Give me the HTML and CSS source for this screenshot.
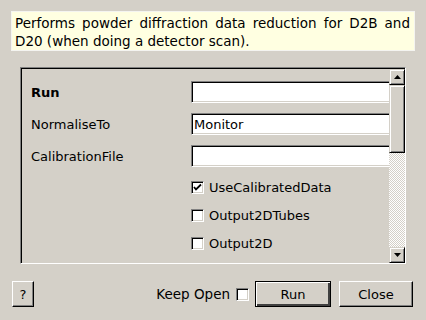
FILE: index.html
```html
<!DOCTYPE html>
<html>
<head>
<meta charset="utf-8">
<link rel="stylesheet" href="styles.css">
</head>
<body>
<div class="dialog">
  <div class="help">Performs powder diffraction data reduction for D2B and D20 (when doing a detector scan).</div>
  <div class="frame">
    <div class="content">
      <div class="row"><span class="label bold">Run</span><span class="input"></span></div>
      <div class="row"><span class="label">NormaliseTo</span><span class="input">Monitor</span></div>
      <div class="row"><span class="label">CalibrationFile</span><span class="input"></span></div>
      <div class="checks">
        <div class="crow"><span class="box"><svg width="11" height="11" viewBox="0 0 11 11"><polyline points="2,5 4,7.5 9,2.5" fill="none" stroke="#000" stroke-width="1.8"/></svg></span><span>UseCalibratedData</span></div>
        <div class="crow"><span class="box"></span><span>Output2DTubes</span></div>
        <div class="crow"><span class="box"></span><span>Output2D</span></div>
      </div>
    </div>
    <div class="scrollbar">
      <div class="sbtn"><svg width="7" height="4" viewBox="0 0 7 4"><polygon points="0,4 7,4 3.5,0" fill="#000"/></svg></div>
      <div class="thumb"></div>
      <div class="track"></div>
      <div class="sbtn"><svg width="7" height="4" viewBox="0 0 7 4"><polygon points="0,0 7,0 3.5,4" fill="#000"/></svg></div>
    </div>
  </div>
  <div class="buttons">
    <div class="btn help-btn">?</div>
    <div class="spacer"></div>
    <span class="keep">Keep Open</span>
    <span class="box keepbox"></span>
    <div class="btn default">Run</div>
    <div class="btn close">Close</div>
  </div>
</div>
</body>
</html>
```

FILE: styles.css
```css
html, body {
  margin: 0;
  padding: 0;
  background: #d4d0c8;
}
body {
  width: 426px;
  height: 320px;
  overflow: hidden;
  font-family: "DejaVu Sans", sans-serif;
  font-size: 13px;
  color: #000;
}
.dialog {
  display: flex;
  flex-direction: column;
  padding-top: 11px;
}
.help {
  margin: 0 11px 0 11px;
  box-sizing: border-box;
  height: 40px;
  border: 1px solid #f4f4f0;
  background: #ffffe1;
  padding: 2px 4px 0 3px;
  font-size: 13.5px;
  line-height: 18px;
  text-align: justify;
}
.frame {
  margin: 16px 0 0 20px;
  width: 386px;
  height: 197px;
  box-sizing: border-box;
  border-style: solid;
  border-width: 1px;
  border-color: #808080 #fff #fff #808080;
  padding: 1px 0 0 1px;
  box-shadow: inset 1px 1px 0 #000;
  display: flex;
}
.content {
  flex: 1;
  overflow: hidden;
  padding: 12px 0 0 9px;
  display: flex;
  flex-direction: column;
  gap: 10px;
}
.row {
  display: flex;
  align-items: center;
  height: 22px;
}
.label {
  width: 160px;
  flex: none;
}
.bold { font-weight: bold; }
.input {
  flex: none;
  width: 210px;
  height: 22px;
  box-sizing: border-box;
  background: #fff;
  border-style: solid;
  border-width: 1px 0 1px 1px;
  border-color: #808080 #fff #fff #808080;
  box-shadow: inset 1px 1px 0 #000, inset 0 -1px 0 #d4d0c8;
  padding: 1px 0 0 2px;
  line-height: 19px;
}
.checks {
  margin-top: -1px;
  padding-left: 160px;
  display: flex;
  flex-direction: column;
  gap: 6px;
}
.crow {
  display: flex;
  align-items: center;
  height: 22px;
  gap: 5px;
}
.box {
  width: 13px;
  height: 13px;
  box-sizing: border-box;
  background: #fff;
  border-style: solid;
  border-width: 1px;
  border-color: #808080 #fff #fff #808080;
  box-shadow: inset 1px 1px 0 #000, inset -1px -1px 0 #d4d0c8;
  display: flex;
  align-items: center;
  justify-content: center;
  flex: none;
}
.box svg { display: block; }
.scrollbar {
  width: 16px;
  flex: none;
  display: flex;
  flex-direction: column;
}
.sbtn, .thumb {
  box-sizing: border-box;
  background: #d4d0c8;
  border-style: solid;
  border-width: 1px;
  border-color: #d4d0c8 #000 #000 #d4d0c8;
  box-shadow: inset 1px 1px 0 #fff, inset -1px -1px 0 #808080;
}
.sbtn {
  height: 16px;
  display: flex;
  align-items: center;
  justify-content: center;
}
.thumb { height: 68px; }
.track {
  flex: 1;
  background-image: repeating-conic-gradient(#ffffff 0 25%, #d4d0c8 0 50%);
  background-size: 2px 2px;
}
.buttons {
  margin-top: 17px;
  height: 26px;
  display: flex;
  align-items: center;
  padding: 0 13px 0 12px;
}
.spacer { flex: 1; }
.btn {
  height: 26px;
  box-sizing: border-box;
  display: flex;
  align-items: center;
  justify-content: center;
  background: #d4d0c8;
  border-style: solid;
  border-width: 1px;
  border-color: #fff #000 #000 #fff;
  box-shadow: inset -1px -1px 0 #808080;
}
.help-btn { width: 22px; }
.keep { margin-right: 6px; font-size: 13.5px; }
.keepbox { margin-right: 6px; }
.default {
  width: 76px;
  border-color: #000;
  box-shadow: inset 1px 1px 0 #fff, inset -2px -2px 0 #404040;
}
.close {
  width: 74px;
  margin-left: 8px;
}
```
